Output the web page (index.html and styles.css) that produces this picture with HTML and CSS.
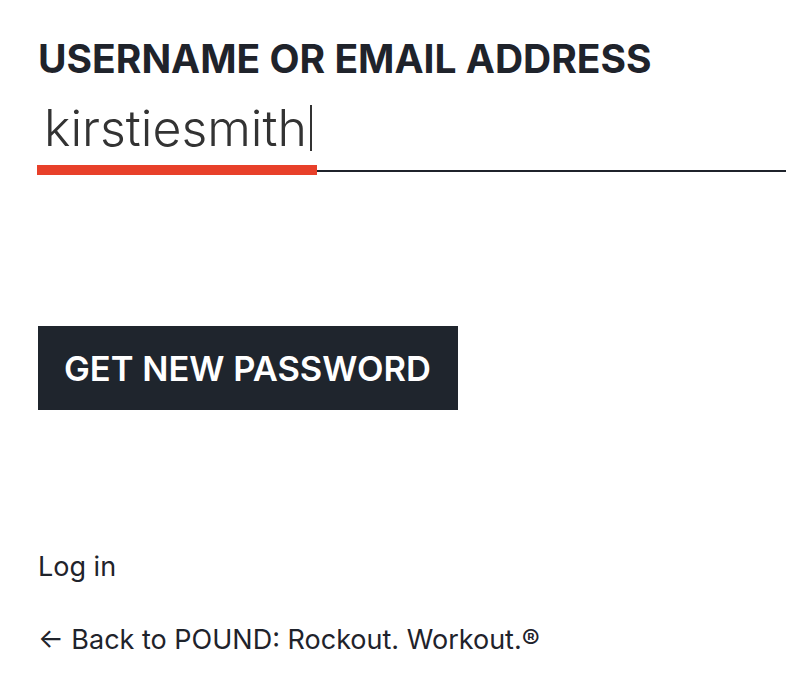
FILE: index.html
```html
<!DOCTYPE html>
<html lang="en">
<head>
  <meta charset="UTF-8" />
  <title>Lost Password - POUND: Rockout. Workout.</title>
  <link rel="stylesheet" href="styles.css">
</head>
<body>

<form class="lostpass">
  <label for="user_login">Username or Email Address</label>
  <div class="field" id="user_login">
    <span class="value">kirstiesmith<span class="caret"></span></span>
  </div>

  <button type="button">Get New Password</button>
</form>

<p class="nav"><a href="#">Log in</a></p>
<p class="back"><a href="#">&larr; Back to POUND: Rockout. Workout.&reg;</a></p>

</body>
</html>
```

FILE: styles.css
```css
body { margin: 0; padding: 36px 24px 0 38px; font-family: Inter, "Noto Sans", sans-serif; color: #1f232b; background: #fff; }
label { display: block; font-size: 39px; font-weight: 700; text-transform: uppercase; line-height: 46px; }
.field { display: flex; margin-top: 8px; border-bottom: 2px solid #1f232b; height: 80px; align-items: flex-end; }
.value { position: relative; display: inline-flex; align-items: center; padding: 0 5px 0 6px; font-size: 50px; font-weight: 300; color: #333; line-height: 60px; margin-bottom: 12px; }
.value::after { content: ""; position: absolute; left: -1px; right: 0; bottom: -17px; height: 10px; background: #e8402a; }
.caret { display: inline-block; width: 2px; height: 46px; background: #333; margin-left: 3px; }
button { margin-top: 154px; height: 84px; padding: 0 27px 0 26px; background: #1f252d; color: #fff; border: none; font-family: Inter, sans-serif; font-size: 34.5px; font-weight: 600; text-transform: uppercase; cursor: pointer; }
.nav, .back { margin: 0; font-size: 27px; }
.nav { margin-top: 140px; }
.back { margin-top: 40px; }
a { color: #1f232b; text-decoration: none; }
```
